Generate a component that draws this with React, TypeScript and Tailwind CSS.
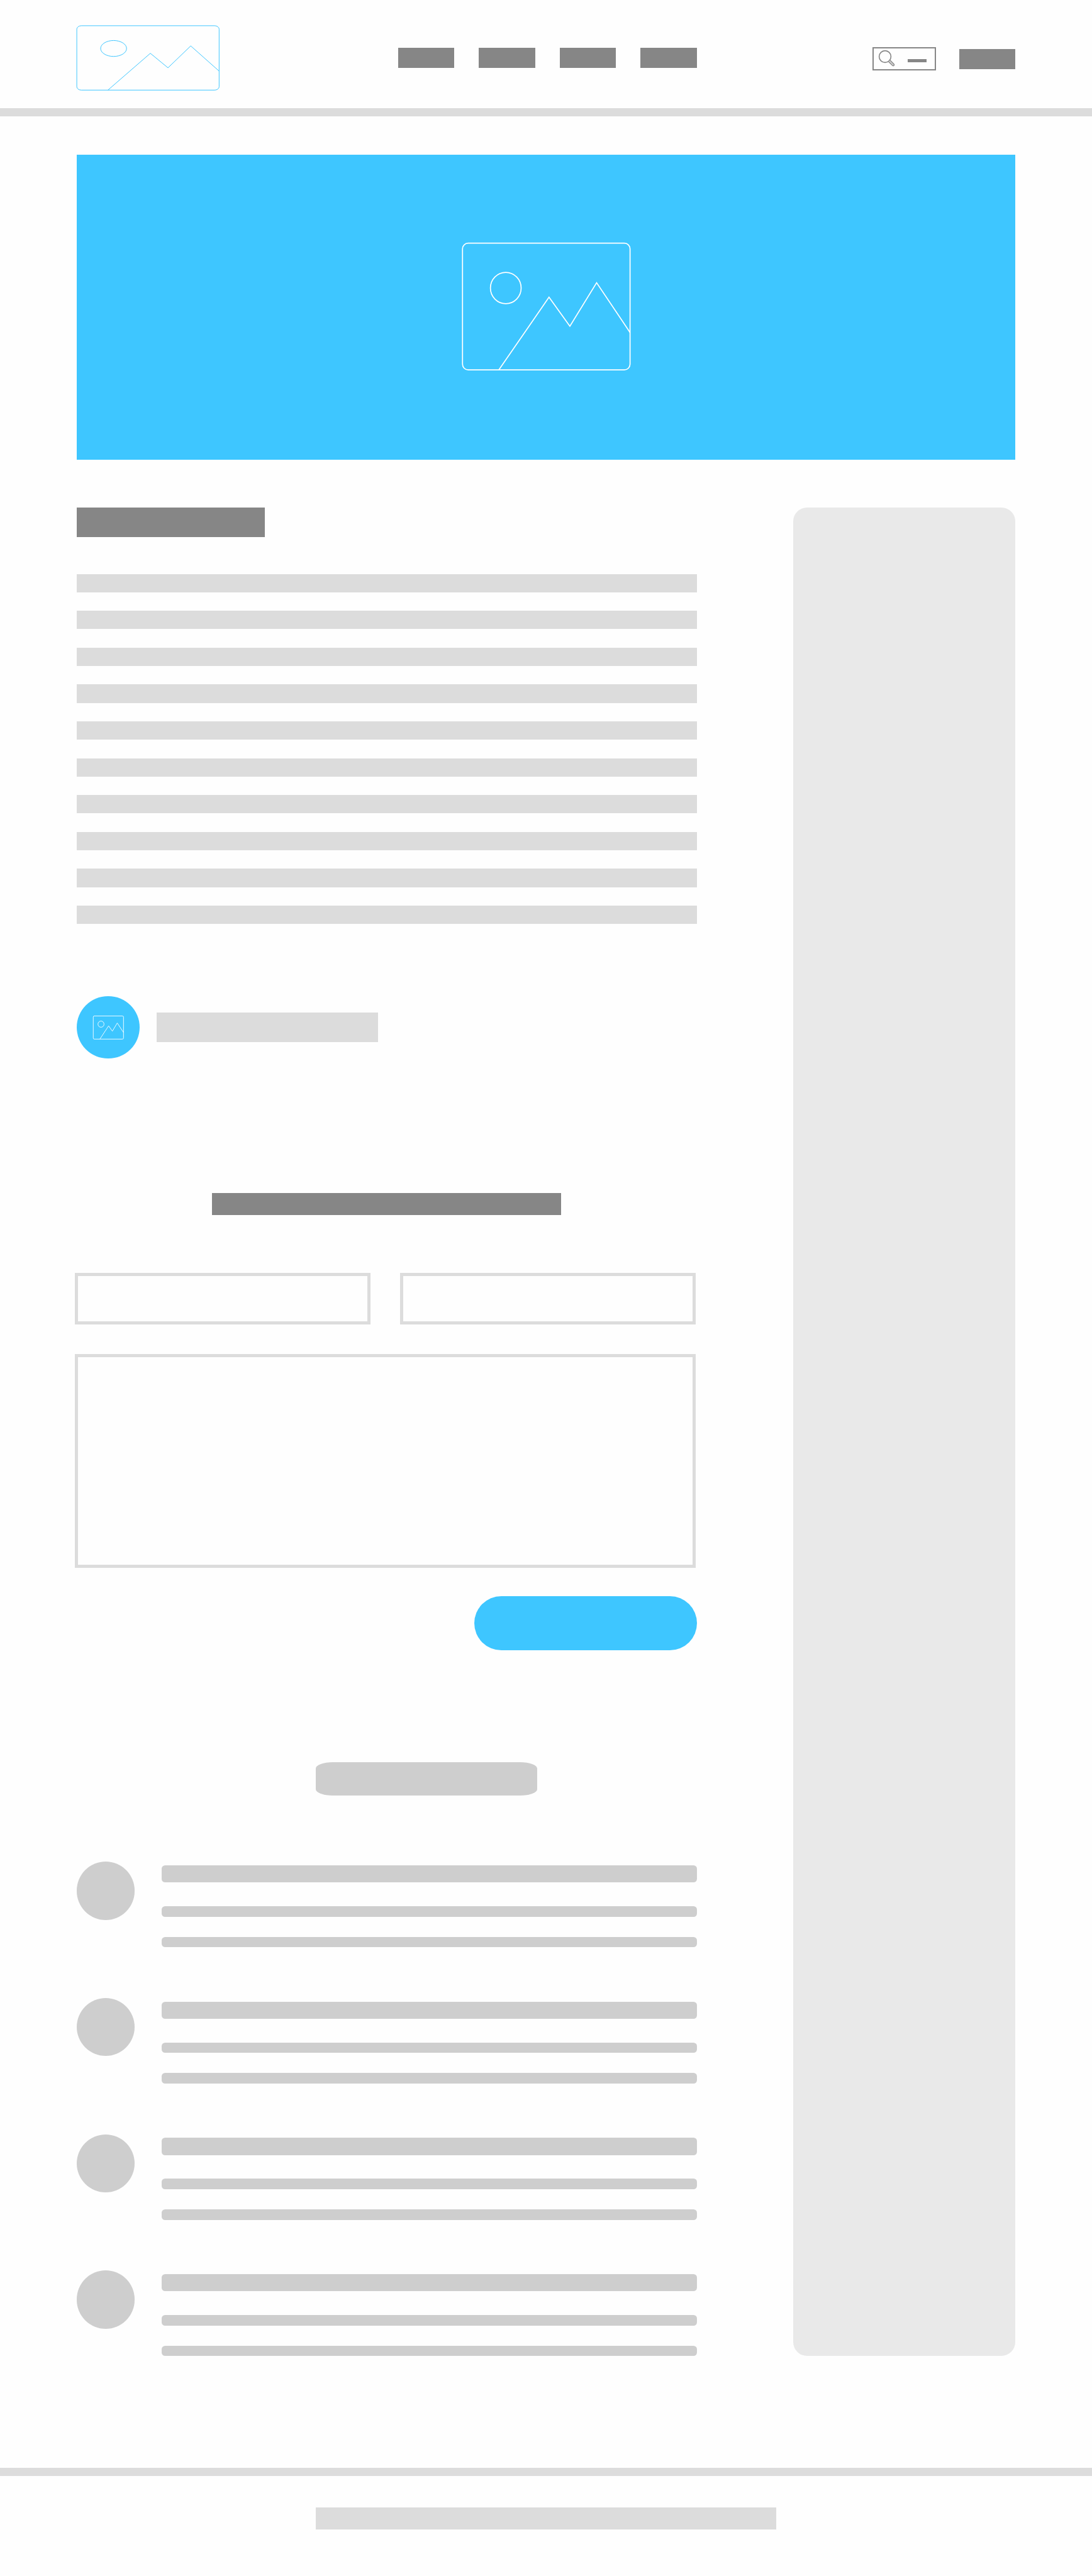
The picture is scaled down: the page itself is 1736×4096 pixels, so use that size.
type PictureProps = {
  className: string;
  viewBox: string;
  frame: { x: number; y: number; width: number; height: number; rx: number; ry: number };
  sun: { cx: number; cy: number; rx: number; ry: number };
  ridge: string;
  strokeWidth: number;
};

function Picture({ className, viewBox, frame, sun, ridge, strokeWidth }: PictureProps) {
  return (
    <svg
      className={className}
      viewBox={viewBox}
      fill="none"
      stroke="currentColor"
      strokeWidth={strokeWidth}
      preserveAspectRatio="none"
    >
      <rect {...frame} />
      <ellipse {...sun} />
      <polyline points={ridge} />
    </svg>
  );
}

function SearchIcon() {
  return (
    <svg className="h-[28px] w-[28px]" viewBox="0 0 31 31" fill="none" stroke="#868686">
      <circle cx="12.2" cy="12.2" r="10.4" strokeWidth="1.8" />
      <path
        d="M18.6 21.2 L25.2 27.8 A1.7 1.7 0 0 0 27.8 25.4 L21 18.6"
        strokeWidth="1.5"
        fill="#d4d4d4"
      />
    </svg>
  );
}

function Header() {
  return (
    <header className="flex h-[185px] items-start border-b-[13px] border-[#dcdcdc] pl-[121px]">
      <Picture
        className="mt-[39.8px] h-[104px] w-[228.8px] shrink-0 text-[#3ec6ff]"
        viewBox="133.8 44 253 115"
        frame={{ x: 135, y: 45, width: 250.2, height: 113.2, rx: 8, ry: 6 }}
        sun={{ cx: 199.7, cy: 85, rx: 22.8, ry: 14 }}
        ridge="189.7,158.2 264.3,93.5 295.3,119 335.3,80.5 385.2,124.8"
        strokeWidth={1.1}
      />
      <nav className="mt-[76px] ml-[283.2px] flex gap-[39px]">
        {[0, 1, 2, 3].map((item) => (
          <a key={item} className="h-[32px] w-[89.4px] bg-[#868686]" />
        ))}
      </nav>
      <div className="mt-[75px] ml-[279.4px] flex h-[37px] w-[101.4px] shrink-0 items-start border-2 border-[#868686]">
        <div className="mt-[2px] ml-[7px]">
          <SearchIcon />
        </div>
        <div className="mt-[17px] ml-[19px] h-[5px] w-[30px] bg-[#868686]" />
      </div>
      <button className="mt-[78px] ml-[36.2px] h-[32px] w-[89.4px] bg-[#868686]" />
    </header>
  );
}

function Hero() {
  return (
    <section className="mt-[61px] ml-[122px] flex h-[484.6px] w-[1492px] items-start bg-[#3ec6ff] pt-[138.2px] pl-[611px]">
      <Picture
        className="h-[206.15px] w-[271.25px] text-white"
        viewBox="810.7 425 300 228"
        frame={{ x: 813.2, y: 428, width: 294.6, height: 222.8, rx: 10, ry: 10 }}
        sun={{ cx: 889.3, cy: 506.8, rx: 27, ry: 27.5 }}
        ridge="877,651 965.3,523 1002,574 1049,497.5 1107.8,585"
        strokeWidth={1.9}
      />
    </section>
  );
}

function Article() {
  return (
    <article>
      <div className="h-[47px] w-[299px] bg-[#868686]" />
      <div className="mt-[58.2px] flex flex-col gap-[29.3px]">
        {Array.from({ length: 10 }, (_, i) => (
          <div key={i} className="h-[29.3px] bg-[#dcdcdc]" />
        ))}
      </div>
      <div className="mt-[114.6px] flex items-center gap-[27px]">
        <div className="flex size-[99.6px] items-center justify-center rounded-full bg-[#3ec6ff]">
          <Picture
            className="h-[39.8px] w-[50.6px] text-white/90"
            viewBox="162.4 1785 56 44"
            frame={{ x: 163.8, y: 1786.6, width: 53.2, height: 40.7, rx: 2, ry: 2 }}
            sun={{ cx: 177.4, cy: 1801, rx: 5.3, ry: 5.4 }}
            ridge="175.5,1827.2 190.8,1804 197.4,1813.3 206,1799 217,1815.6"
            strokeWidth={1.1}
          />
        </div>
        <div className="h-[47px] w-[352.7px] bg-[#dcdcdc]" />
      </div>
    </article>
  );
}

function CommentForm() {
  return (
    <form className="mt-[213.6px]">
      <div className="ml-[215.4px] h-[34.5px] w-[555px] bg-[#868686]" />
      <div className="mt-[92px] -ml-[2.6px] w-[986.2px]">
        <div className="flex gap-[46.8px]">
          <div className="h-[82.3px] flex-1 border-[5px] border-[#dcdcdc]" />
          <div className="h-[82.3px] flex-1 border-[5px] border-[#dcdcdc]" />
        </div>
        <div className="mt-[47px] h-[340.4px] border-[5px] border-[#dcdcdc]" />
      </div>
      <button className="mt-[44.8px] ml-auto block h-[86.3px] w-[353.2px] rounded-full bg-[#3ec6ff]" />
    </form>
  );
}

function Comment() {
  return (
    <li className="flex h-[135.8px] justify-between">
      <div className="size-[92.4px] rounded-full bg-[#cecece]" />
      <div className="mt-[5.6px] w-[850.4px]">
        <div className="h-[27.4px] rounded-[5.5px] bg-[#cecece]" />
        <div className="mt-[37.7px] h-[16.6px] rounded-[5.5px] bg-[#cecece]" />
        <div className="mt-[32.1px] h-[16.6px] rounded-[5.5px] bg-[#cecece]" />
      </div>
    </li>
  );
}

function Comments() {
  return (
    <section className="mt-[177.8px]">
      <div className="ml-[379.9px] h-[53.4px] w-[352.6px] rounded-[27px/10px] bg-[#cecece]" />
      <ul className="mt-[104.8px] flex flex-col gap-[80.9px]">
        {[0, 1, 2, 3].map((comment) => (
          <Comment key={comment} />
        ))}
      </ul>
    </section>
  );
}

export default function App() {
  return (
    <div className="flex h-[4096px] w-[1736px] flex-col overflow-hidden bg-[#fefefe] font-['Liberation_Sans',sans-serif]">
      <Header />
      <Hero />
      <div className="mt-[76.8px] ml-[122px] flex h-[2938.6px] w-[1492px] justify-between">
        <main className="w-[985.6px]">
          <Article />
          <CommentForm />
          <Comments />
        </main>
        <aside className="w-[352.6px] rounded-[22px] bg-[#e9e9e9]" />
      </div>
      <footer className="mt-[178px] flex justify-center border-t-[13px] border-[#dcdcdc] pt-[50.5px]">
        <div className="h-[34.4px] w-[732.4px] bg-[#dcdcdc]" />
      </footer>
    </div>
  );
}
